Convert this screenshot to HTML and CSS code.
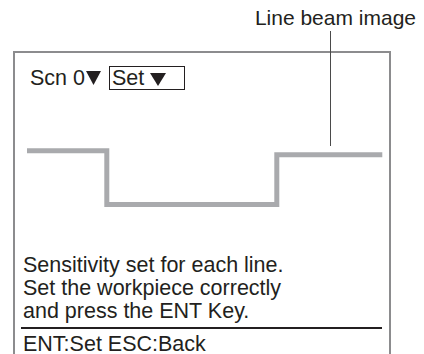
FILE: index.html
```html
<!DOCTYPE html>
<html lang="en">
<head>
<meta charset="utf-8">
<title>Line beam image</title>
<link rel="stylesheet" href="styles.css">
</head>
<body>
<div class="figure">
  <div class="callout">Line beam image</div>
  <div class="leader"></div>
  <div class="screen">
    <div class="toprow">Scn 0<svg class="tri tri-a" width="15" height="14" viewBox="0 0 15 14"><polygon points="0,0 15,0 7.5,14" /></svg><span class="select">Set<svg class="tri tri-b" width="16" height="13" viewBox="0 0 16 13"><polygon points="0,0 16,0 8,13" /></svg></span></div>
    <svg class="beam" width="373" height="150" viewBox="0 0 373 150">
      <polyline points="12,49.8 91.8,49.8 91.8,103.5 261.8,103.5 261.8,53.8 367.3,53.8" />
    </svg>
    <div class="message">Sensitivity set for each line.<br>Set the workpiece correctly<br>and press the ENT Key.</div>
    <div class="rule"></div>
    <div class="footer">ENT:Set ESC:Back</div>
  </div>
</div>
</body>
</html>
```
FILE: styles.css
```css
html, body {
  margin: 0;
  padding: 0;
  background: #ffffff;
}
body {
  font-family: "Liberation Sans", Arial, sans-serif;
  font-size: 21.5px;
  line-height: 23px;
  color: #231f20;
  overflow: hidden;
}
.figure {
  position: relative;
  width: 424px;
  height: 354px;
  overflow: hidden;
}
.callout {
  height: 45px;
  padding-top: 6px;
  padding-right: 8px;
  text-align: right;
  font-size: 21px;
}
.leader {
  position: absolute;
  left: 329.5px;
  top: 31px;
  width: 1.5px;
  height: 115px;
  background: #4a4a4a;
}
.screen {
  margin-left: 13px;
  width: 378px;
  box-sizing: border-box;
  border: 2px solid #8c8c8e;
  border-bottom: none;
  height: 303px;
}
.toprow {
  padding-top: 13px;
  padding-left: 15px;
  white-space: nowrap;
}
.tri {
  fill: #231f20;
}
.tri-a {
  margin-left: 1px;
  margin-right: 8px;
  vertical-align: baseline;
}
.select {
  display: inline-block;
  box-sizing: border-box;
  width: 76px;
  line-height: 22px;
  border: 1px solid #231f20;
  padding-left: 2px;
}
.tri-b {
  margin-left: 6px;
  vertical-align: -1px;
}
.beam {
  display: block;
  margin-top: 11px;
}
.beam polyline {
  fill: none;
  stroke: #a9aaad;
  stroke-width: 5;
  stroke-linejoin: miter;
  stroke-linecap: butt;
}
.message {
  margin-top: 3px;
  padding-left: 8px;
}
.rule {
  margin: 4px 7px 0 6px;
  height: 1.5px;
  background: #231f20;
}
.footer {
  margin-top: 6px;
  padding-left: 8px;
  line-height: 19px;
}
```
